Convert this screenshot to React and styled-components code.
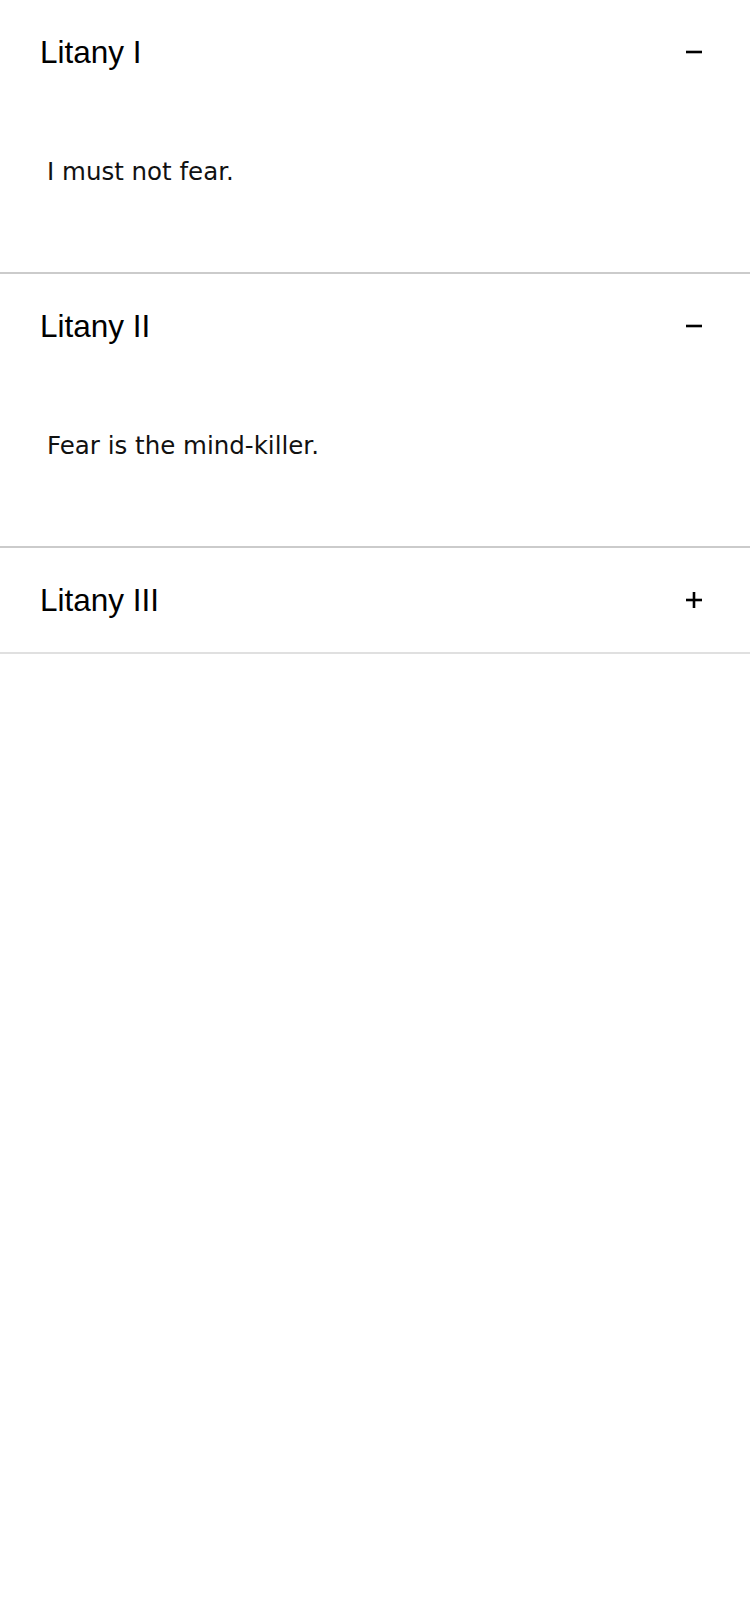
import { useState } from "react";
import styled, { createGlobalStyle } from "styled-components";

const items = [
  { id: 1, title: "Litany I", body: "I must not fear." },
  { id: 2, title: "Litany II", body: "Fear is the mind-killer." },
  { id: 3, title: "Litany III", body: "Fear is the little-death that brings total obliteration." },
];

export default function App() {
  const [open, setOpen] = useState([1, 2]);

  function toggle(id) {
    setOpen(open.includes(id) ? open.filter((x) => x !== id) : [...open, id]);
  }

  return (
    <>
      <Global />
      <Accordion>
        {items.map((it) => {
          const isOpen = open.includes(it.id);
          return (
            <Item key={it.id} open={isOpen}>
              <Header type="button" onClick={() => toggle(it.id)}>
                <Title>{it.title}</Title>
                <Icon open={isOpen} />
              </Header>
              {isOpen && (
                <Panel>
                  <Text>{it.body}</Text>
                </Panel>
              )}
            </Item>
          );
        })}
      </Accordion>
    </>
  );
}

function Icon({ open }) {
  return (
    <IconBox viewBox="0 0 16 16">
      <line x1="0" y1="8" x2="16" y2="8" />
      {!open && <line x1="8" y1="0" x2="8" y2="16" />}
    </IconBox>
  );
}

const Global = createGlobalStyle`
  body {
    margin: 0;
    background: #ffffff;
    font-family: "Liberation Sans", Arial, sans-serif;
  }
`;

const Accordion = styled.div`
  display: flex;
  flex-direction: column;
`;

const Item = styled.div`
  border-bottom: 2px solid ${(p) => (p.open ? "#cbcbcb" : "#e0e0e0")};
`;

const Header = styled.button`
  width: 100%;
  height: 104px;
  padding: 0 48px 0 40px;
  display: flex;
  align-items: center;
  justify-content: space-between;
  border: none;
  background: transparent;
  cursor: pointer;
  text-align: left;
`;

const Title = styled.span`
  font-family: "Liberation Sans", Arial, sans-serif;
  font-size: 31.5px;
  color: #000;
`;

const IconBox = styled.svg`
  width: 16px;
  height: 16px;
  stroke: #000;
  stroke-width: 2.6;
  fill: none;
`;

const Panel = styled.div`
  padding: 53px 40px 86px 47px;
`;

const Text = styled.p`
  margin: 0;
  font-family: "DejaVu Sans", sans-serif;
  font-size: 24.5px;
  line-height: 29px;
  color: #111;
`;
